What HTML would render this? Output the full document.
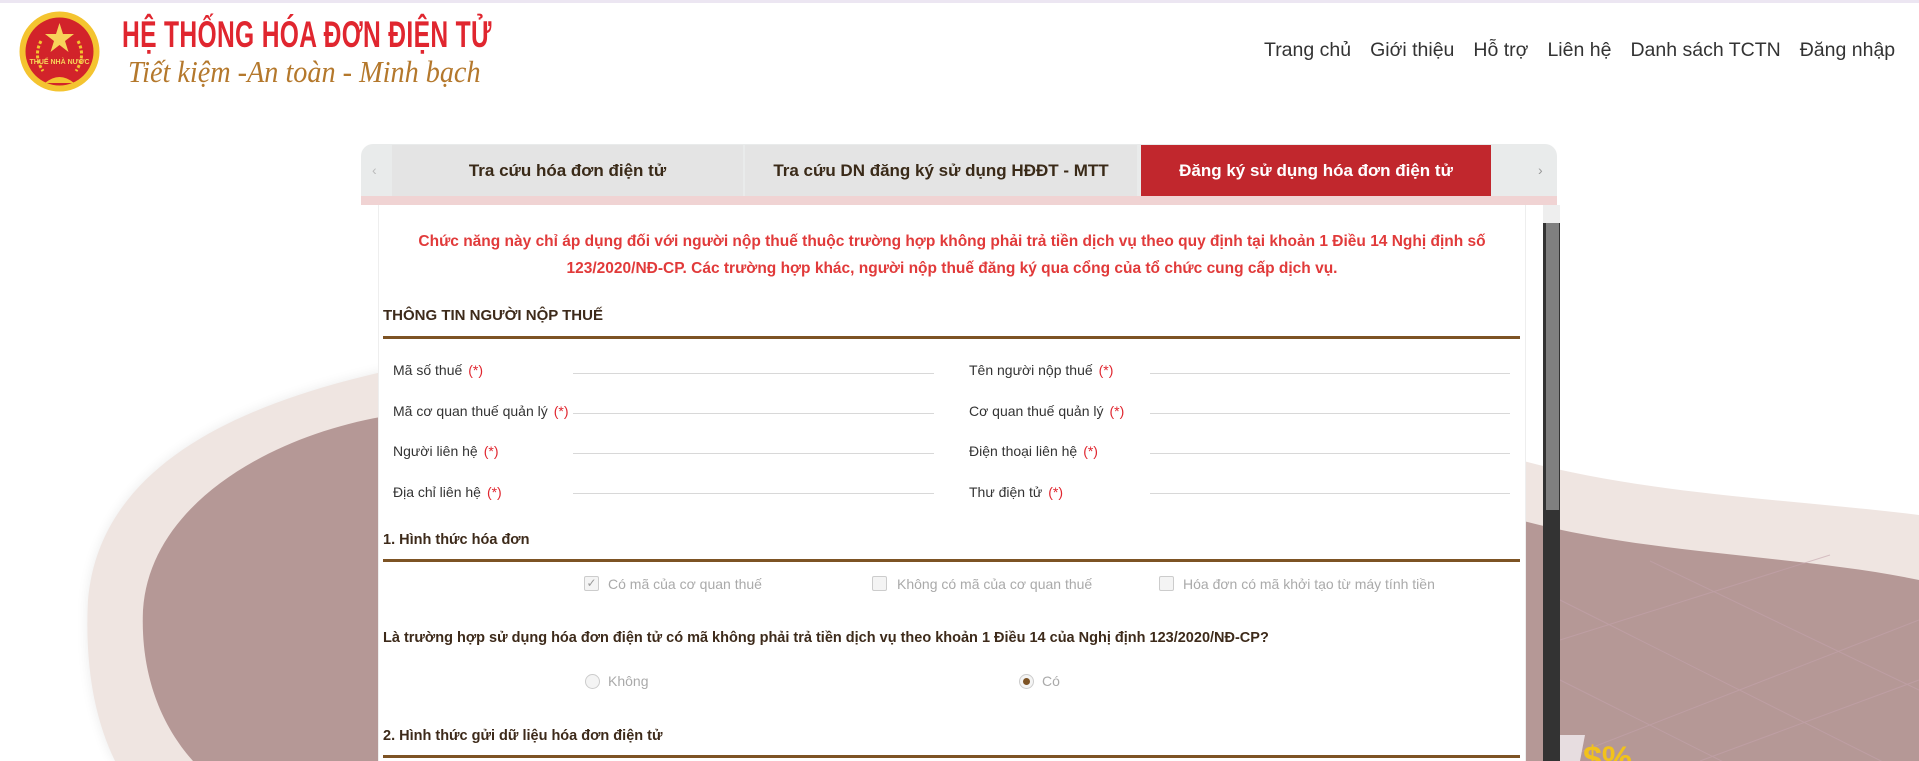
<!DOCTYPE html>
<html><head><meta charset="utf-8"><style>
*{box-sizing:border-box;margin:0;padding:0}
html,body{width:1919px;height:761px;overflow:hidden}
body{background:#fff;font-family:"Liberation Sans",sans-serif;position:relative;color:#333}
.abs{position:absolute}
.topline{left:0;top:0;width:1919px;height:3px;background:#ece6f2}
.title{left:122px;top:14px;font-weight:bold;font-size:37px;color:#e0262f;transform:scaleX(.665);transform-origin:left top;white-space:nowrap;letter-spacing:.5px}
.sub{left:128px;top:54px;font-family:"Liberation Serif",serif;font-style:italic;font-size:31px;color:#b4782c;white-space:nowrap;transform:scaleX(.91);transform-origin:left top}
.nav{top:39px;left:1264px;font-size:19.5px;color:#333;white-space:nowrap;word-spacing:0}
.nav span{margin-right:19px}
.tabs{left:361px;top:144px;width:1196px;height:52px;background:#e9ebeb;border-radius:12px 12px 0 0}
.tab{top:145px;height:51px;background:#e4e4e4;font-weight:bold;font-size:17px;color:#3a2a18;display:flex;align-items:center;justify-content:center}
.pink{left:361px;top:196px;width:1196px;height:9px;background:#f0d3d3}
.panel{left:378px;top:205px;width:1148px;height:556px;background:#fff;border-left:1px solid #eee;border-right:1px solid #eee}
.notice{left:378px;width:1148px;text-align:center;color:#e13a3a;font-weight:bold;font-size:15.5px;line-height:27px;top:228px}
.h{left:383px;font-weight:bold;color:#3d2a1a;font-size:15px}
.hl{left:383px;width:1137px;height:3px;background:#7d5324}
.lab{font-size:14px;color:#333}
.lab b{color:#e0262f;font-weight:normal;margin-left:6px}
.ln{height:1px;background:#d8d8d8}
.cb{width:15px;height:15px;border:1px solid #ccc;border-radius:2px;background:#f4f4f4}
.gt{font-size:14px;color:#aaa}
.rd{width:15px;height:15px;border:1px solid #ccc;border-radius:50%;background:#f4f4f4}
</style></head><body>
<svg class="abs" style="left:0;top:0" width="1919" height="761">
<defs><filter id="sh" x="-20%" y="-20%" width="140%" height="140%"><feGaussianBlur stdDeviation="6"/></filter></defs>
<path d="M400 368 C250 400 100 460 88 600 C84 680 100 730 115 761 L400 761Z" fill="#000" opacity=".08" filter="url(#sh)"/>
<path d="M400 368 C250 400 100 460 88 600 C84 680 100 730 115 761 L400 761Z" fill="#efe5e1"/>
<path d="M400 414 C280 430 150 500 143 610 C140 680 165 730 193 761 L400 761Z" fill="#b59896"/>
<path d="M1520 460 C1650 495 1800 500 1919 515 L1919 761 L1520 761Z" fill="#efe5e1"/>
<path d="M1520 520 C1650 555 1800 555 1919 580 L1919 761 L1520 761Z" fill="#b59896"/>
<g stroke="#c4a3ad" stroke-width="1" opacity=".6">
<line x1="1560" y1="600" x2="1919" y2="780"/><line x1="1560" y1="680" x2="1919" y2="860"/><line x1="1650" y1="561" x2="1919" y2="690"/>
<line x1="1560" y1="640" x2="1830" y2="555"/><line x1="1560" y1="760" x2="1919" y2="620"/><line x1="1700" y1="761" x2="1919" y2="680"/></g>
<path d="M1560 735 L1585 735 L1580 761 L1560 761Z" fill="#e7dde0"/>
<text x="1583" y="770" font-family="Liberation Sans" font-weight="bold" font-size="34" fill="#f2c21b">$%</text>
</svg>
<div class="abs topline"></div>
<svg class="abs" style="left:19px;top:11px" width="81" height="81" viewBox="0 0 81 81">
<circle cx="40.5" cy="40.5" r="40" fill="#f4c430"/><circle cx="40.5" cy="40.5" r="34" fill="#d2232a"/>
<path d="M40.5 12 L44 23 L55 23 L46 30 L49.5 41 L40.5 34 L31.5 41 L35 30 L26 23 L37 23Z" fill="#f7d35a"/>
<path d="M22 30 Q14 45 24 60 M59 30 Q67 45 57 60" stroke="#f4c430" stroke-width="3" fill="none" stroke-dasharray="3 2"/>
<path d="M26 72 Q40.5 60 55 72 Z" fill="#f4c430"/>
<text x="40.5" y="53" text-anchor="middle" font-family="Liberation Sans" font-weight="bold" font-size="7" fill="#f7d35a">THUẾ NHÀ NƯỚC</text>
</svg>
<div class="abs title">HỆ THỐNG HÓA ĐƠN ĐIỆN TỬ</div>
<div class="abs sub">Tiết kiệm -An toàn - Minh bạch</div>
<div class="abs nav"><span>Trang chủ</span><span>Giới thiệu</span><span>Hỗ trợ</span><span>Liên hệ</span><span>Danh sách TCTN</span><span style="margin:0">Đăng nhập</span></div>

<div class="abs tabs"></div>
<div class="abs" style="left:372px;top:162px;color:#bbb;font-size:14px">‹</div>
<div class="abs" style="left:1538px;top:162px;color:#999;font-size:14px">›</div>
<div class="abs tab" style="left:392px;width:351px">Tra cứu hóa đơn điện tử</div>
<div class="abs tab" style="left:745px;width:392px">Tra cứu DN đăng ký sử dụng HĐĐT - MTT</div>
<div class="abs tab" style="left:1141px;width:350px;background:#c1272d;color:#fff">Đăng ký sử dụng hóa đơn điện tử</div>
<div class="abs pink"></div>
<div class="abs panel"></div>
<div class="abs" style="left:1543px;top:205px;width:17px;height:556px;background:#333"></div>
<div class="abs" style="left:1543px;top:205px;width:17px;height:18px;background:#eee"></div>
<div class="abs" style="left:1546px;top:223px;width:13px;height:287px;background:#7f7f7f"></div>

<div class="abs notice">Chức năng này chỉ áp dụng đối với người nộp thuế thuộc trường hợp không phải trả tiền dịch vụ theo quy định tại khoản 1 Điều 14 Nghị định số<br>123/2020/NĐ-CP. Các trường hợp khác, người nộp thuế đăng ký qua cổng của tổ chức cung cấp dịch vụ.</div>
<div class="abs h" style="top:307px">THÔNG TIN NGƯỜI NỘP THUẾ</div>
<div class="abs hl" style="top:336px"></div>

<div class="abs lab" style="left:393px;top:362px">Mã số thuế<b>(*)</b></div>
<div class="abs lab" style="left:393px;top:403px">Mã cơ quan thuế quản lý<b>(*)</b></div>
<div class="abs lab" style="left:393px;top:443px">Người liên hệ<b>(*)</b></div>
<div class="abs lab" style="left:393px;top:484px">Địa chỉ liên hệ<b>(*)</b></div>
<div class="abs lab" style="left:969px;top:362px">Tên người nộp thuế<b>(*)</b></div>
<div class="abs lab" style="left:969px;top:403px">Cơ quan thuế quản lý<b>(*)</b></div>
<div class="abs lab" style="left:969px;top:443px">Điện thoại liên hệ<b>(*)</b></div>
<div class="abs lab" style="left:969px;top:484px">Thư điện tử<b>(*)</b></div>
<div class="abs ln" style="left:573px;top:373px;width:361px"></div>
<div class="abs ln" style="left:573px;top:413px;width:361px"></div>
<div class="abs ln" style="left:573px;top:453px;width:361px"></div>
<div class="abs ln" style="left:573px;top:493px;width:361px"></div>
<div class="abs ln" style="left:1150px;top:373px;width:360px"></div>
<div class="abs ln" style="left:1150px;top:413px;width:360px"></div>
<div class="abs ln" style="left:1150px;top:453px;width:360px"></div>
<div class="abs ln" style="left:1150px;top:493px;width:360px"></div>

<div class="abs h" style="top:532px;font-size:14.5px">1. Hình thức hóa đơn</div>
<div class="abs hl" style="top:559px"></div>
<div class="abs cb" style="left:584px;top:576px;color:#999;font-size:12px;line-height:13px;text-align:center">✓</div>
<div class="abs gt" style="left:608px;top:576px">Có mã của cơ quan thuế</div>
<div class="abs cb" style="left:872px;top:576px"></div>
<div class="abs gt" style="left:897px;top:576px">Không có mã của cơ quan thuế</div>
<div class="abs cb" style="left:1159px;top:576px"></div>
<div class="abs gt" style="left:1183px;top:576px">Hóa đơn có mã khởi tạo từ máy tính tiền</div>

<div class="abs h" style="top:630px;font-size:14.5px">Là trường hợp sử dụng hóa đơn điện tử có mã không phải trả tiền dịch vụ theo khoản 1 Điều 14 của Nghị định 123/2020/NĐ-CP?</div>
<div class="abs rd" style="left:585px;top:674px"></div>
<div class="abs gt" style="left:608px;top:673px">Không</div>
<div class="abs rd" style="left:1019px;top:674px;display:flex;align-items:center;justify-content:center"><div style="width:7px;height:7px;border-radius:50%;background:#7d5324"></div></div>
<div class="abs gt" style="left:1042px;top:673px">Có</div>

<div class="abs h" style="top:728px;font-size:14.5px">2. Hình thức gửi dữ liệu hóa đơn điện tử</div>
<div class="abs hl" style="top:755px"></div>
</body></html>
